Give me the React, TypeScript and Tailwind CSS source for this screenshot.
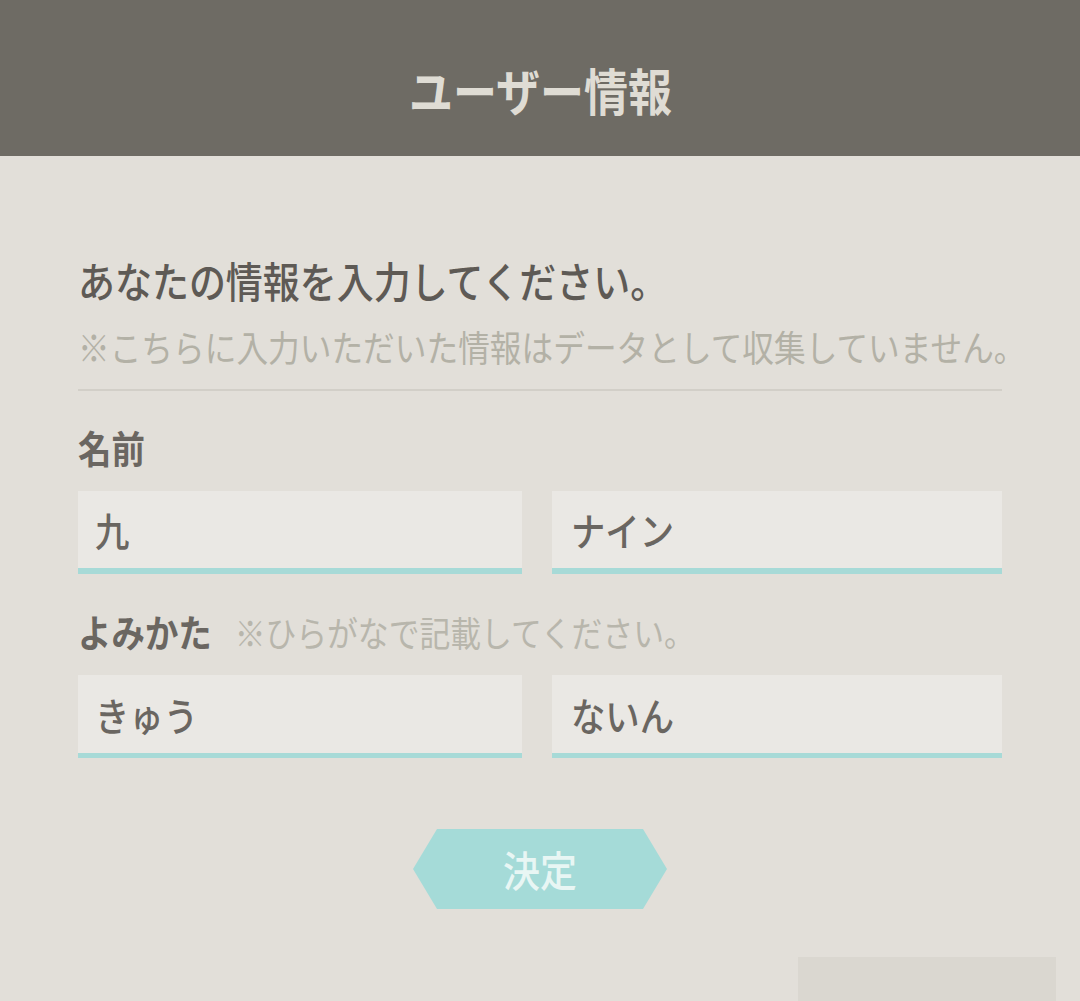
export default function App() {
  return (
    <div className="w-[1080px] h-[1001px] overflow-hidden bg-[#e2dfd9] font-['Noto_Sans_CJK_JP',sans-serif] flex flex-col">
      <header className="h-[156px] shrink-0 bg-[#6e6b64] flex items-center justify-center pt-[22px]">
        <h1 className="text-[50px] leading-none font-bold text-[#dfdcd4] scale-x-[0.88] origin-center whitespace-nowrap">
          ユーザー情報
        </h1>
      </header>

      <main className="px-[78px] pt-[103px] flex flex-col">
        <h2 className="text-[42px] leading-none h-[42px] font-medium text-[#5e5a55] scale-x-[0.88] origin-left whitespace-nowrap">
          あなたの情報を入力してください。
        </h2>
        <p className="mt-[27px] text-[36px] leading-none h-[36px] text-[#b3b1a6] scale-x-[0.88] origin-left whitespace-nowrap">
          ※こちらに入力いただいた情報はデータとして収集していません。
        </p>
        <div className="mt-[25px] h-[2px] bg-[#d2cfc8]" />

        <div className="mt-[37px] h-[38px] text-[38px] leading-none font-semibold text-[#6a6661] scale-x-[0.88] origin-left whitespace-nowrap">
          名前
        </div>
        <div className="mt-[25px] grid grid-cols-[444px_450px] gap-[30px]">
          <div className="h-[83px] bg-[#eae8e4] border-b-[6px] border-[#a7dad7] flex items-center pl-[17px]">
            <span className="text-[39px] leading-none font-medium text-[#6a6661] scale-x-[0.88] origin-left whitespace-nowrap">九</span>
          </div>
          <div className="h-[83px] bg-[#eae8e4] border-b-[6px] border-[#a7dad7] flex items-center pl-[19px]">
            <span className="text-[39px] leading-none font-medium text-[#6a6661] scale-x-[0.88] origin-left whitespace-nowrap">ナイン</span>
          </div>
        </div>

        <div className="mt-[38px] h-[38px] flex items-center gap-[26px] scale-x-[0.88] origin-left whitespace-nowrap">
          <span className="text-[38px] leading-none font-semibold text-[#6a6661]">よみかた</span>
          <span className="text-[35px] leading-none text-[#b8b6ac]">※ひらがなで記載してください。</span>
        </div>
        <div className="mt-[25px] grid grid-cols-[444px_450px] gap-[30px]">
          <div className="h-[83px] bg-[#eae8e4] border-b-[5px] border-[#a7dad7] flex items-center pl-[17px]">
            <span className="text-[39px] leading-none font-medium text-[#6a6661] scale-x-[0.88] origin-left whitespace-nowrap">きゅう</span>
          </div>
          <div className="h-[83px] bg-[#eae8e4] border-b-[5px] border-[#a7dad7] flex items-center pl-[19px]">
            <span className="text-[39px] leading-none font-medium text-[#6a6661] scale-x-[0.88] origin-left whitespace-nowrap">ないん</span>
          </div>
        </div>

        <div className="mt-[71px] flex justify-center">
          <button className="w-[254px] h-[80px] bg-[#a5dbd8] flex items-center justify-center [clip-path:polygon(24px_0,calc(100%-24px)_0,100%_50%,calc(100%-24px)_100%,24px_100%,0_50%)]">
            <span className="text-[42px] leading-none font-medium text-[#e8f6f4] scale-x-[0.88] whitespace-nowrap">決定</span>
          </button>
        </div>
      </main>

      <div className="mt-[48px] ml-[798px] w-[258px] h-[60px] bg-[#dad7d0] shrink-0" />
    </div>
  );
}
